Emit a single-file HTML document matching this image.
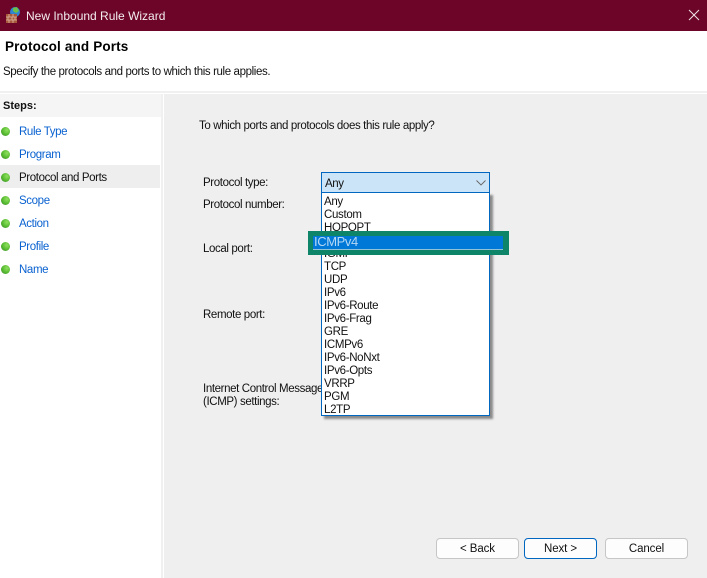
<!DOCTYPE html>
<html><head><meta charset="utf-8"><style>
html,body{margin:0;padding:0}
body{width:707px;height:578px;overflow:hidden;position:relative;background:#fff;font-family:"Liberation Sans",sans-serif;font-size:11.5px;letter-spacing:-.38px;color:#111}
.a{position:absolute;white-space:nowrap;line-height:14px;margin-top:1px}
.b{position:absolute}
.s{left:19px;color:#0a62d0}
.d{position:absolute;left:1px;width:9px;height:9px;border-radius:50%;background:radial-gradient(circle at 65% 35%,#8fe05f 0,#55b92f 55%,#3f7f35 100%)}
.l{left:324px;font-size:11.5px;letter-spacing:-.33px;color:#111}
.btn{position:absolute;top:538px;height:19px;border:1px solid #c6c6c6;border-radius:4px;background:#fdfdfd;text-align:center;line-height:21px;font-size:11.5px;letter-spacing:-.1px}
</style></head><body>
<div class="b" style="left:0;top:0;width:707px;height:31px;background:#6c0527"></div>
<svg class="b" style="left:5px;top:6px" width="17" height="17" viewBox="0 0 17 17"><circle cx="10" cy="6" r="5" fill="#2f86d0"/><path d="M8 2l4-1 2 4-3 2-3-2z" fill="#6cc04a"/><path d="M1 8h11v9H1z" fill="#a8583a"/><path d="M1 11h11M1 14h11M4 8v3M8 8v3M3 11v3M7 11v3M10 11v3M4 14v3M8 14v3" stroke="#dcb9a4" stroke-width=".8"/></svg>
<div class="a" style="left:26px;top:8px;color:#f5eef0;font-size:12px;letter-spacing:0">New Inbound Rule Wizard</div>
<svg class="b" style="left:688px;top:9px" width="12" height="12" viewBox="0 0 12 12"><path d="M1 1l10 10M11 1L1 11" stroke="#f0e4e8" stroke-width="1"/></svg>

<div class="a" style="left:5px;top:39px;font-size:13.5px;letter-spacing:.15px;font-weight:bold;color:#000">Protocol and Ports</div>
<div class="a" style="left:3px;top:64px">Specify the protocols and ports to which this rule applies.</div>
<div class="b" style="left:0;top:91px;width:707px;height:2px;background:#f0f0f0"></div>

<div class="b" style="left:0;top:94px;width:161px;height:23px;background:#f5f5f5"></div>
<div class="a" style="left:3px;top:98px;font-weight:bold;font-size:11px;letter-spacing:0;color:#111">Steps:</div>
<div class="b" style="left:161px;top:94px;width:2px;height:484px;background:#f0f0f0"></div>
<div class="b" style="left:164px;top:94px;width:543px;height:484px;background:#efefef"></div>
<div class="b" style="left:0;top:165px;width:160px;height:23px;background:#eeeeee"></div>

<div class="d" style="top:127px"></div><div class="a s" style="top:124px">Rule Type</div>
<div class="d" style="top:150px"></div><div class="a s" style="top:147px">Program</div>
<div class="d" style="top:173px"></div><div class="a s" style="top:170px;color:#111">Protocol and Ports</div>
<div class="d" style="top:196px"></div><div class="a s" style="top:193px">Scope</div>
<div class="d" style="top:219px"></div><div class="a s" style="top:216px">Action</div>
<div class="d" style="top:242px"></div><div class="a s" style="top:239px">Profile</div>
<div class="d" style="top:265px"></div><div class="a s" style="top:262px">Name</div>

<div class="a" style="left:199px;top:118px">To which ports and protocols does this rule apply?</div>
<div class="a" style="left:203px;top:175px">Protocol type:</div>
<div class="a" style="left:203px;top:197px">Protocol number:</div>
<div class="a" style="left:203px;top:241px">Local port:</div>
<div class="a" style="left:203px;top:307px">Remote port:</div>
<div class="a" style="left:203px;top:381px">Internet Control Message</div>
<div class="a" style="left:203px;top:394px">(ICMP) settings:</div>

<div class="b" style="left:321px;top:172px;width:167px;height:19px;background:#cce4f7;border:1px solid #0067c0"></div>
<div class="a" style="left:325px;top:176px">Any</div>
<svg class="b" style="left:476px;top:180px" width="10" height="6" viewBox="0 0 10 6"><path d="M.5.5L5 5 9.500.5" fill="none" stroke="#666" stroke-width=".9"/></svg>

<div class="b" style="left:321px;top:192px;width:167px;height:222px;background:#fff;border:1px solid #0067c0;box-shadow:3px 3px 2px #8a8a8a"></div>
<div class="a l" style="top:194px">Any</div>
<div class="a l" style="top:207px">Custom</div>
<div class="a l" style="top:220px">HOPOPT</div>
<div class="a l" style="top:246px">IGMP</div>
<div class="a l" style="top:259px">TCP</div>
<div class="a l" style="top:272px">UDP</div>
<div class="a l" style="top:285px">IPv6</div>
<div class="a l" style="top:298px">IPv6-Route</div>
<div class="a l" style="top:311px">IPv6-Frag</div>
<div class="a l" style="top:324px">GRE</div>
<div class="a l" style="top:337px">ICMPv6</div>
<div class="a l" style="top:350px">IPv6-NoNxt</div>
<div class="a l" style="top:363px">IPv6-Opts</div>
<div class="a l" style="top:376px">VRRP</div>
<div class="a l" style="top:389px">PGM</div>
<div class="a l" style="top:402px">L2TP</div>

<div class="b" style="left:308px;top:231px;width:201px;height:24px;background:#0e8468"></div>
<div class="b" style="left:313px;top:236px;width:190px;height:13px;background:#0078d7;border-bottom:1px solid #8fc3d8"></div>
<div class="a" style="left:314px;top:234px;color:#b5d8f5;font-size:13px;letter-spacing:-.4px">ICMPv4</div>

<div class="btn" style="left:436px;width:81px">&lt; Back</div>
<div class="btn" style="left:524px;width:71px;border-color:#0067c0">Next &gt;</div>
<div class="btn" style="left:605px;width:81px">Cancel</div>
</body></html>
